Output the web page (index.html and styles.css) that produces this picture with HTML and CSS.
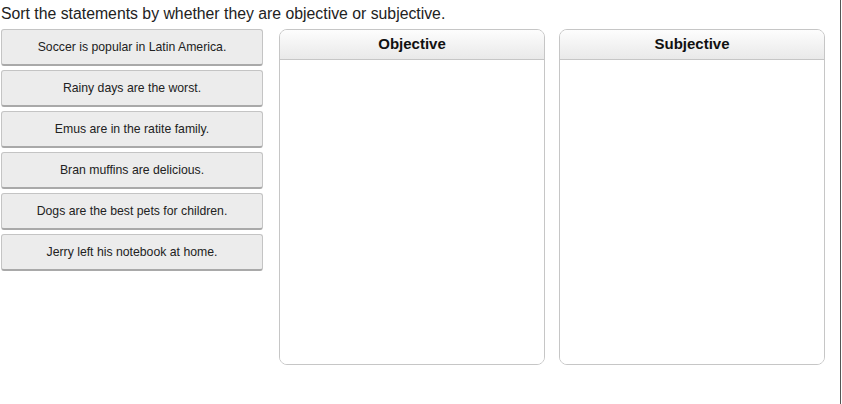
FILE: index.html
```html
<!DOCTYPE html>
<html>
<head>
<meta charset="utf-8">
<link rel="stylesheet" href="styles.css">
</head>
<body>
<div class="page">
  <div class="prompt">Sort the statements by whether they are objective or subjective.</div>
  <div class="work">
    <div class="items">
      <div class="item">Soccer is popular in Latin America.</div>
      <div class="item">Rainy days are the worst.</div>
      <div class="item">Emus are in the ratite family.</div>
      <div class="item">Bran muffins are delicious.</div>
      <div class="item">Dogs are the best pets for children.</div>
      <div class="item">Jerry left his notebook at home.</div>
    </div>
    <div class="bin">
      <div class="bin-head">Objective</div>
      <div class="bin-body"></div>
    </div>
    <div class="bin">
      <div class="bin-head">Subjective</div>
      <div class="bin-body"></div>
    </div>
  </div>
</div>
</body>
</html>
```
FILE: styles.css
```css
html, body {
  margin: 0;
  padding: 0;
  background: #fff;
}
body {
  font-family: "Liberation Sans", Arial, sans-serif;
  color: #222;
}
.page {
  width: 841px;
  height: 404px;
  border-right: 1px solid #555;
  padding-left: 1px;
  box-sizing: border-box;
}
.prompt {
  font-size: 15.8px;
  line-height: 18px;
  padding-top: 5px;
  height: 29px;
  box-sizing: border-box;
}
.work {
  display: flex;
  align-items: flex-start;
}
.items {
  width: 262px;
  display: flex;
  flex-direction: column;
  gap: 4px;
  margin-right: 16px;
}
.item {
  height: 37px;
  box-sizing: border-box;
  background: #ececec;
  border: 1px solid #c4c4c4;
  border-bottom: 2px solid #a9a9a9;
  border-radius: 3px;
  font-size: 12.25px;
  display: flex;
  align-items: center;
  justify-content: center;
  color: #222;
}
.bin {
  width: 266px;
  height: 336px;
  box-sizing: border-box;
  border: 1px solid #c6c6c6;
  border-radius: 8px;
  margin-right: 14px;
  overflow: hidden;
  display: flex;
  flex-direction: column;
}
.bin-head {
  height: 30px;
  box-sizing: border-box;
  border-bottom: 1px solid #c6c6c6;
  background: linear-gradient(#fdfdfd, #e9e9e9);
  font-weight: bold;
  font-size: 15px;
  text-align: center;
  line-height: 28px;
  color: #111;
}
.bin-body {
  flex: 1;
  background: #fff;
}
```
